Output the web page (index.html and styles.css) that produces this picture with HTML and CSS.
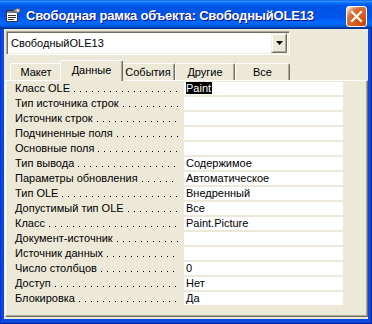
FILE: index.html
```html
<!DOCTYPE html>
<html lang="ru">
<head>
<meta charset="utf-8">
<link rel="stylesheet" href="styles.css">
</head>
<body>
<div class="window">
  <div class="titlebar">
    <svg class="app-icon" width="16" height="16" viewBox="0 0 16 16">
      <rect x="1.5" y="3.5" width="11" height="11" fill="#fff" stroke="#333"/>
      <rect x="2" y="4" width="10" height="2" fill="#6b7b9c"/>
      <line x1="3" y1="8.5" x2="11" y2="8.5" stroke="#333"/>
      <line x1="3" y1="10.5" x2="11" y2="10.5" stroke="#333"/>
      <line x1="3" y1="12.5" x2="9" y2="12.5" stroke="#333"/>
      <path d="M8 4 L12 1 L15 2 L15 5 L12 6 Z" fill="#a0a0a0" stroke="#555" stroke-width="0.8"/>
      <circle cx="13" cy="3.5" r="1.2" fill="#e0e0e0"/>
    </svg>
    <span class="title">Свободная рамка объекта: СвободныйOLE13</span>
    <div class="close">
      <svg width="21" height="21" viewBox="0 0 21 21">
        <path d="M6 6 L15 15 M15 6 L6 15" stroke="#fff" stroke-width="2.2" stroke-linecap="square"/>
      </svg>
    </div>
  </div>
  <div class="body">
    <div class="combo">
      <span class="combo-text">СвободныйOLE13</span>
      <span class="combo-btn">
        <svg width="7" height="4" viewBox="0 0 7 4"><path d="M0 0 H7 L3.5 4 Z" fill="#000"/></svg>
      </span>
    </div>
    <div class="tabs">
      <div class="tab w-maket">Макет</div>
      <div class="tab active w-dannye">Данные</div>
      <div class="tab w-sob">События</div>
      <div class="tab w-dr">Другие</div>
      <div class="tab w-vse">Все</div>
    </div>
    <div class="panel">
      <div class="rows">
        <div class="row"><div class="label"><span>Класс OLE</span><i class="dots"></i></div><div class="value"><span class="sel">Paint</span></div></div>
        <div class="row"><div class="label"><span>Тип источника строк</span><i class="dots"></i></div><div class="value"></div></div>
        <div class="row"><div class="label"><span>Источник строк</span><i class="dots"></i></div><div class="value"></div></div>
        <div class="row"><div class="label"><span>Подчиненные поля</span><i class="dots"></i></div><div class="value"></div></div>
        <div class="row"><div class="label"><span>Основные поля</span><i class="dots"></i></div><div class="value"></div></div>
        <div class="row"><div class="label"><span>Тип вывода</span><i class="dots"></i></div><div class="value">Содержимое</div></div>
        <div class="row"><div class="label"><span>Параметры обновления</span><i class="dots"></i></div><div class="value">Автоматическое</div></div>
        <div class="row"><div class="label"><span>Тип OLE</span><i class="dots"></i></div><div class="value">Внедренный</div></div>
        <div class="row"><div class="label"><span>Допустимый тип OLE</span><i class="dots"></i></div><div class="value">Все</div></div>
        <div class="row"><div class="label"><span>Класс</span><i class="dots"></i></div><div class="value">Paint.Picture</div></div>
        <div class="row"><div class="label"><span>Документ-источник</span><i class="dots"></i></div><div class="value"></div></div>
        <div class="row"><div class="label"><span>Источник данных</span><i class="dots"></i></div><div class="value"></div></div>
        <div class="row"><div class="label"><span>Число столбцов</span><i class="dots"></i></div><div class="value">0</div></div>
        <div class="row"><div class="label"><span>Доступ</span><i class="dots"></i></div><div class="value">Нет</div></div>
        <div class="row"><div class="label"><span>Блокировка</span><i class="dots"></i></div><div class="value">Да</div></div>
      </div>
    </div>
  </div>
</div>
</body>
</html>
```

FILE: styles.css
```css
* { box-sizing: border-box; }
html, body { margin: 0; padding: 0; }
body {
  width: 372px;
  height: 324px;
  overflow: hidden;
  font-family: "Liberation Sans", Arial, sans-serif;
  font-size: 11px;
  color: #000;
}
.window {
  width: 372px;
  height: 324px;
  display: flex;
  flex-direction: column;
  background: #0A4BDC;
  box-shadow: inset 1px 0 #0831D9, inset -1px 0 #001EA0, inset 0 -1px #001EA0;
}
.titlebar {
  height: 29px;
  flex: none;
  display: flex;
  align-items: center;
  padding-left: 5px;
  background: linear-gradient(to bottom, #0058EE 0%, #3593FF 4%, #288EFF 6%, #127DFF 8%, #036FFC 10%, #0262EE 14%, #0057E5 20%, #0054E3 24%, #0055EB 56%, #005BF5 66%, #026AFE 76%, #0062EF 86%, #0052D6 92%, #0040AB 94%, #003092 100%);
}
.app-icon { flex: none; margin-right: 5px; margin-top: 1px; }
.title {
  color: #fff;
  font-weight: bold;
  font-size: 13px;
  letter-spacing: -0.2px;
  white-space: nowrap;
  text-shadow: 1px 1px #0F1089;
  margin-top: 1px;
}
.close {
  margin-left: auto;
  margin-right: 5px;
  align-self: flex-start;
  margin-top: 6px;
  width: 21px;
  height: 21px;
  border: 1px solid #fff;
  border-radius: 3px;
  background: radial-gradient(circle at 90% 90%, #CC4600 0%, #DC6527 55%, #CD7546 70%, #FFCCB2 90%, #fff 100%);
  display: flex;
  align-items: center;
  justify-content: center;
}
.close svg { display: block; margin: -1px; }

.body {
  flex: 1;
  margin: 0 4px 5px 4px;
  background: #ECE9D8;
  display: flex;
  flex-direction: column;
}
.combo {
  margin: 2px 0 0 2px;
  width: 284px;
  height: 24px;
  border-top: 1px solid #ACA899;
  border-left: 1px solid #ACA899;
  border-right: 1px solid #fff;
  border-bottom: 1px solid #fff;
  box-shadow: inset 1px 1px #716F64, inset -1px -1px #F1EFE2;
  background: #fff;
  display: flex;
  align-items: center;
  padding: 2px 2px 2px 2px;
}
.combo-text { flex: 1; padding-left: 2px; line-height: 20px; }
.combo-btn {
  width: 16px;
  height: 20px;
  background: #ECE9D8;
  border-top: 1px solid #F1EFE2;
  border-left: 1px solid #F1EFE2;
  border-right: 1px solid #716F64;
  border-bottom: 1px solid #716F64;
  box-shadow: inset 1px 1px #fff, inset -1px -1px #ACA899;
  display: flex;
  align-items: center;
  justify-content: center;
}
.combo-btn svg { display: block; }

.tabs {
  margin-top: 6px;
  height: 19px;
  display: flex;
  align-items: flex-end;
  padding-left: 6px;
  position: relative;
  z-index: 1;
}
.tab {
  height: 17px;
  line-height: 15px;
  padding-top: 1px;
  text-align: center;
  background: #ECE9D8;
  border-top: 1px solid #fff;
  border-left: 1px solid #fff;
  border-right: 1px solid #716F64;
  box-shadow: inset -1px 0 #ACA899;
  border-radius: 2px 2px 0 0;
  white-space: nowrap;
}
.tab.active {
  height: 21px;
  margin-bottom: -1px;
  padding-top: 2px;
  margin-left: -2px;
  margin-right: -2px;
  position: relative;
  z-index: 2;
}
.w-maket { width: 52px; }
.w-dannye { width: 63px; }
.w-sob { width: 54px; }
.w-dr { width: 60px; }
.w-vse { width: 55px; }

.panel {
  flex: 1;
  margin: 0 0 2px 1px;
  border-top: 1px solid #fff;
  border-left: 1px solid #fff;
  border-right: 1px solid #716F64;
  border-bottom: 1px solid #716F64;
  box-shadow: inset -1px -1px #ACA899;
}
.rows {
  padding: 1px 0 0 9px;
  display: flex;
  flex-direction: column;
  gap: 2px;
}
.row {
  display: flex;
  height: 13px;
  line-height: 13px;
}
.label {
  width: 169px;
  display: flex;
  align-items: flex-end;
  padding-right: 6px;
  white-space: nowrap;
}
.label span { padding-right: 4px; }
.dots {
  flex: 1;
  height: 1px;
  margin-bottom: 3px;
  background-image: linear-gradient(to right, #000 1px, transparent 1px);
  background-size: 6px 1px;
  background-repeat: repeat-x;
}
.value {
  width: 159px;
  background: #fff;
  padding-left: 2px;
  white-space: nowrap;
}
.sel {
  display: inline-block;
  background: #000;
  color: #fff;
  line-height: 12px;
  padding: 0 1px 0 0;
  vertical-align: top;
}
```
